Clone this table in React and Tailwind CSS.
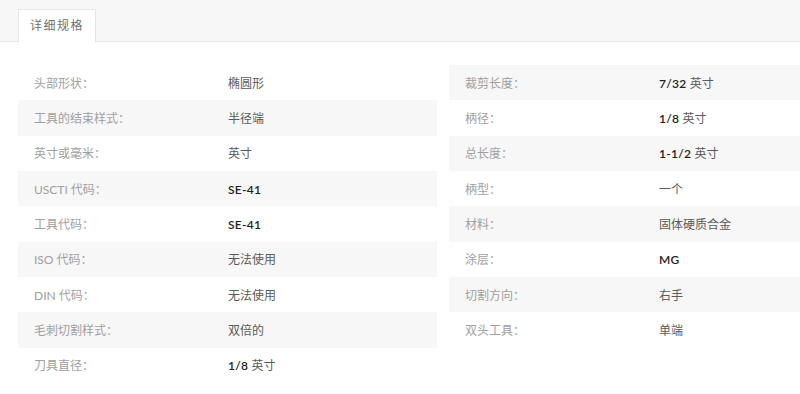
const left = [
  ["头部形状：", ["", "椭圆形"]],
  ["工具的结束样式：", ["", "半径端"]],
  ["英寸或毫米：", ["", "英寸"]],
  ["USCTI 代码：", ["SE-41", ""]],
  ["工具代码：", ["SE-41", ""]],
  ["ISO 代码：", ["", "无法使用"]],
  ["DIN 代码：", ["", "无法使用"]],
  ["毛刺切割样式：", ["", "双倍的"]],
  ["刀具直径：", ["1/8", "英寸"]],
]

const right = [
  ["裁剪长度：", ["7/32", "英寸"]],
  ["柄径：", ["1/8", "英寸"]],
  ["总长度：", ["1-1/2", "英寸"]],
  ["柄型：", ["", "一个"]],
  ["材料：", ["", "固体硬质合金"]],
  ["涂层：", ["MG", ""]],
  ["切割方向：", ["", "右手"]],
  ["双头工具：", ["", "单端"]],
]

function SpecRow({ label, value, shaded }) {
  const [num, txt] = value
  return (
    <div className={`flex h-[35.35px] items-center pt-[2px] ${shaded ? "bg-[#f7f7f7]" : ""}`}>
      <div className="w-[210px] shrink-0 pl-4 text-[#a0a0a0]">{label}</div>
      <div className="text-[#5a5a5a]">
        {num && <span className="font-semibold tracking-[0.3px] text-[#222]">{num}</span>}
        {num && txt ? " " : ""}
        {txt}
      </div>
    </div>
  )
}

export default function App() {
  return (
    <div
      className="h-[394px] w-[800px] overflow-hidden bg-white text-[12px]"
      style={{ fontFamily: 'Lato, "Noto Sans CJK SC", sans-serif' }}
    >
      <div className="flex h-[42px] items-end border-b border-[#e6e6e6] bg-[#f7f7f7] pl-[18px]">
        <div className="-mb-px flex h-[33px] w-[78px] items-center justify-center border border-b-0 border-[#e6e6e6] bg-white tracking-[1.5px] text-[#707070]">
          详细规格
        </div>
      </div>
      <div className="grid grid-cols-[419px_419px] gap-x-3 pl-[18px] pt-[23px]">
        <div>
          {left.map(([l, v], i) => (
            <SpecRow key={l} label={l} value={v} shaded={i % 2 === 1} />
          ))}
        </div>
        <div>
          {right.map(([l, v], i) => (
            <SpecRow key={l} label={l} value={v} shaded={i % 2 === 0} />
          ))}
        </div>
      </div>
    </div>
  )
}
